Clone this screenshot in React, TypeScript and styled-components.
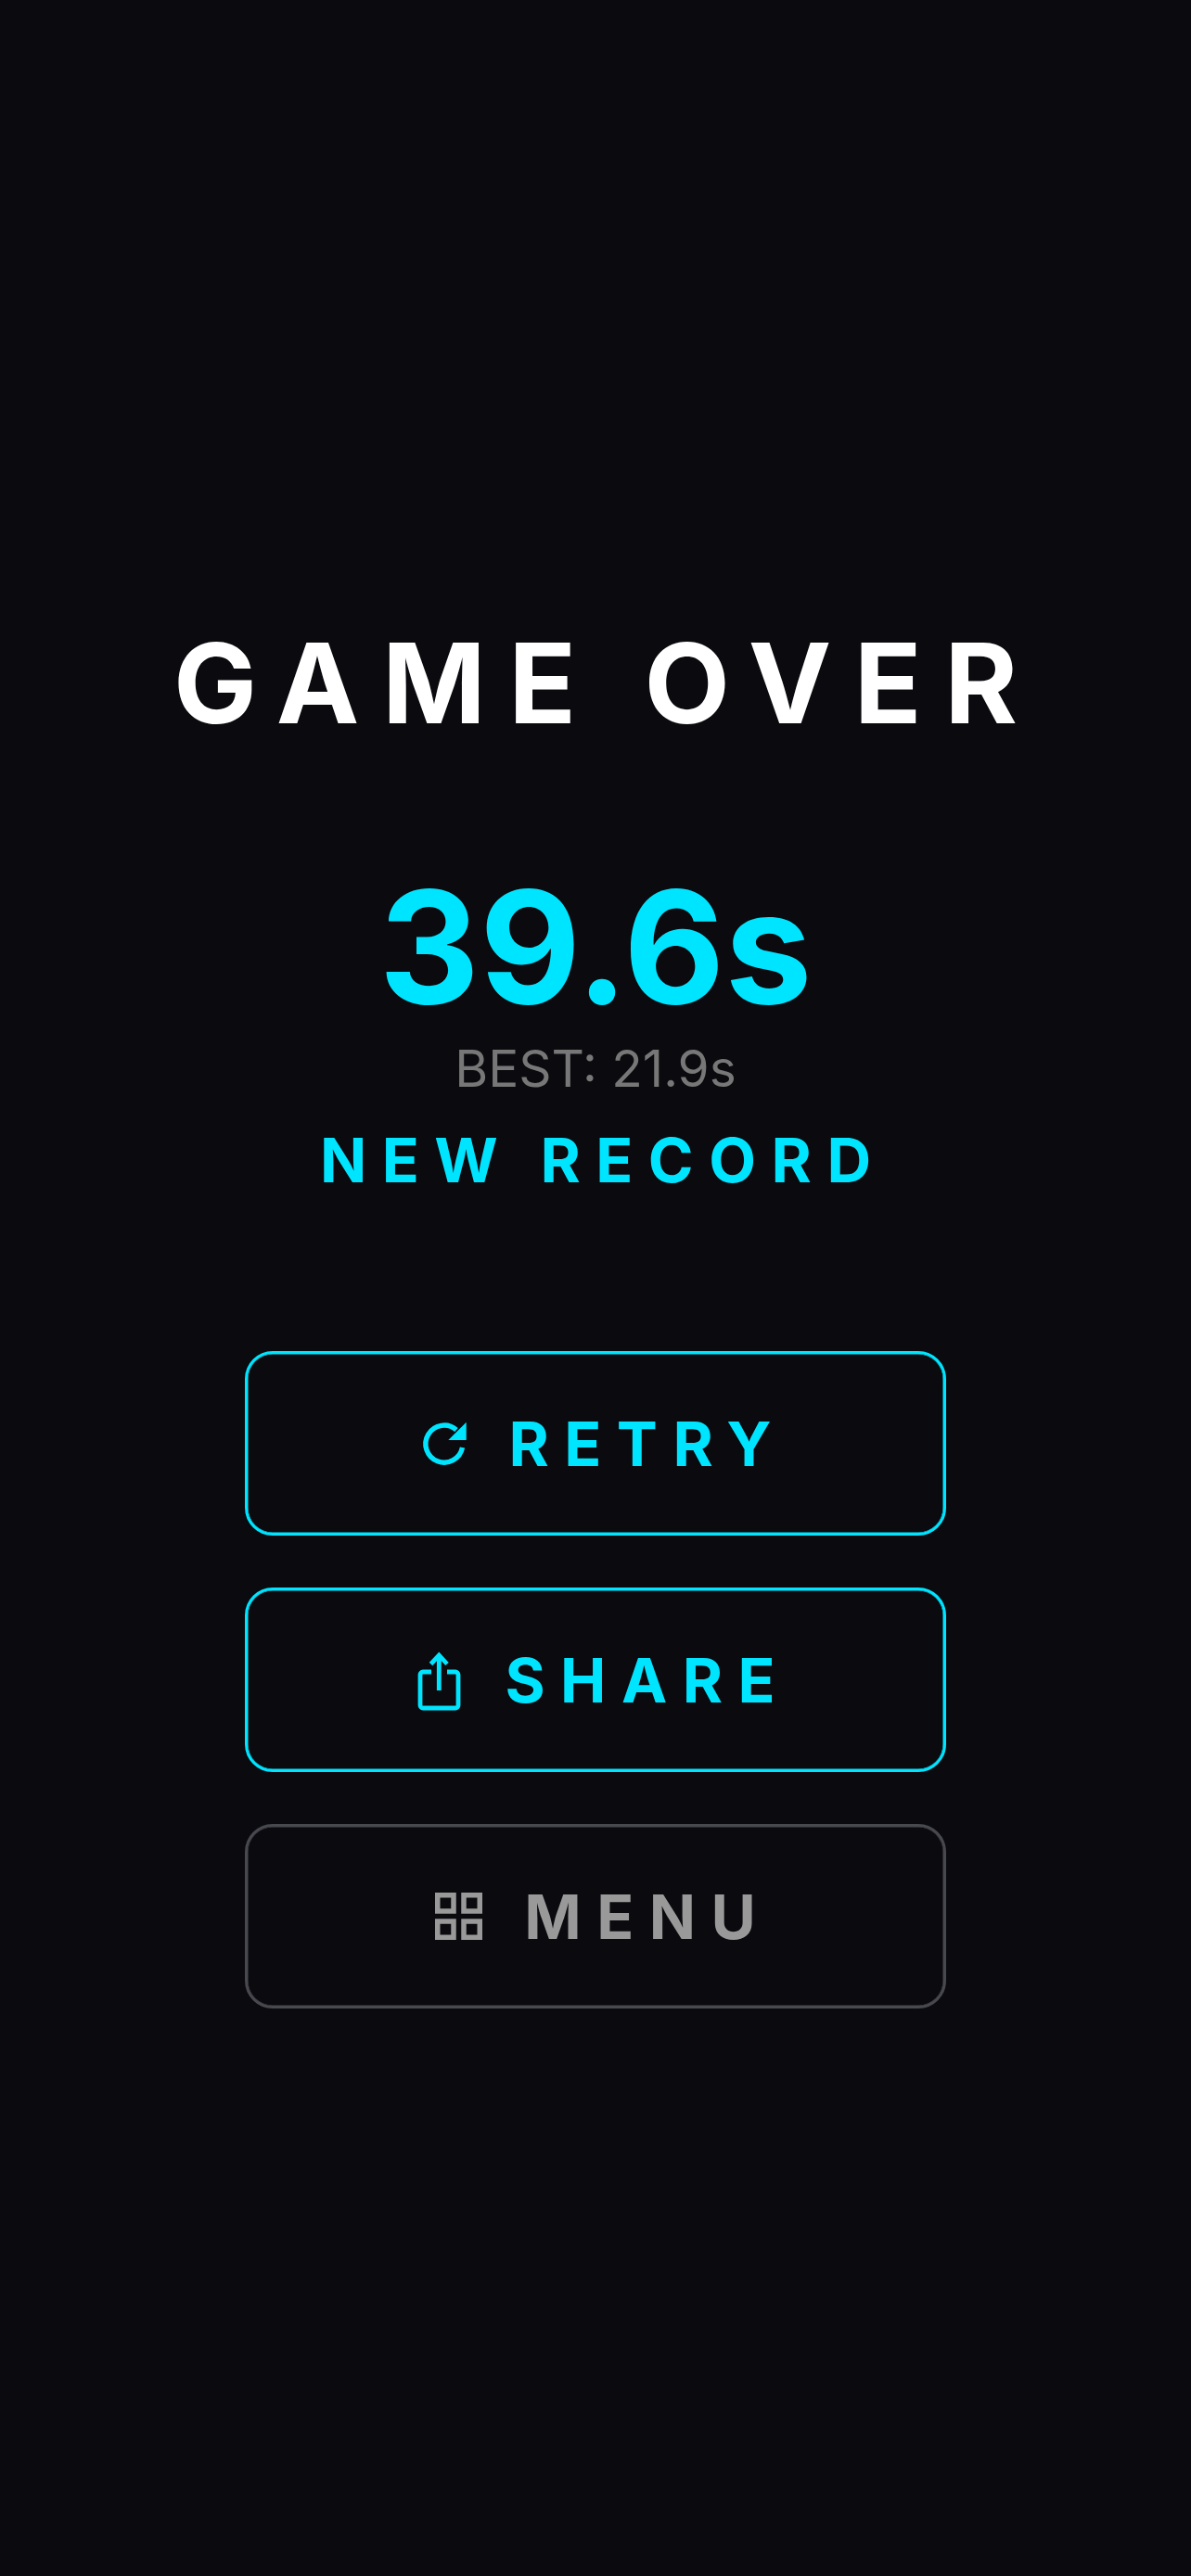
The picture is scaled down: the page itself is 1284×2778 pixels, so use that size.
import * as React from 'react'
import styled, { createGlobalStyle } from 'styled-components'

const GlobalStyle = createGlobalStyle`
  html, body {
    margin: 0;
    background: #0a0a0f;
  }
`

const Screen = styled.div`
  width: 1284px;
  height: 2778px;
  box-sizing: border-box;
  padding-top: 664px;
  display: flex;
  flex-direction: column;
  align-items: center;
  background: #0a0a0f;
  font-family: Inter, "Liberation Sans", sans-serif;
`

const Title = styled.h1`
  margin: 0 -24.5px 0 0;
  color: #fff;
  font-size: 120px;
  line-height: 145px;
  font-weight: 700;
  letter-spacing: 24.5px;
  word-spacing: -4px;
  white-space: nowrap;
`

const Score = styled.div`
  margin-top: 110px;
  color: #00e5ff;
  font-size: 168px;
  line-height: 204px;
  font-weight: 700;
`

const Best = styled.div`
  margin-top: -4px;
  color: #777;
  font-size: 55px;
  line-height: 66px;
  font-weight: 400;
`

const Record = styled.div`
  margin: 26px -16.5px 0 0;
  color: #00e5ff;
  font-size: 66px;
  line-height: 80px;
  font-weight: 700;
  letter-spacing: 16.5px;
  word-spacing: -3px;
`

const Buttons = styled.div`
  margin-top: 166px;
  display: flex;
  flex-direction: column;
  gap: 56px;
`

const ActionButton = styled.button<{ $muted?: boolean }>`
  width: 756px;
  height: 199px;
  padding: 0;
  display: flex;
  align-items: center;
  justify-content: center;
  gap: ${p => (p.$muted ? '45px' : '42px')};
  box-sizing: border-box;
  background: transparent;
  border: 3px solid ${p => (p.$muted ? '#48484f' : '#00e5ff')};
  box-shadow: inset 0 0 0 0.5px ${p => (p.$muted ? '#48484f' : '#00e5ff')};
  border-radius: 30px;
  color: ${p => (p.$muted ? '#999' : '#00e5ff')};
  font-family: inherit;
  font-size: 66px;
  line-height: 80px;
  font-weight: 700;
  letter-spacing: 16.5px;
`

const Label = styled.span`
  margin-right: -16.5px;
`

const RetryIcon = () => (
  <svg width="54" height="54" viewBox="0 0 54 54" fill="none">
    <path d="M46.5 31A20 20 0 1 1 40 12" stroke="currentColor" strokeWidth="5.4" />
    <path d="M50.7 3.7V23H31.3Z" fill="currentColor" />
  </svg>
)

const ShareIcon = () => (
  <svg width="54" height="68" viewBox="2 0 54 68" fill="none" stroke="currentColor" strokeWidth="4.8">
    <path d="M19 25H10a3 3 0 0 0-3 3V61a3 3 0 0 0 3 3H45a3 3 0 0 0 3-3V28a3 3 0 0 0-3-3H36" />
    <path d="M27.3 45V7" />
    <path d="M18.5 16.5L27.3 7L36 16.5" />
  </svg>
)

const MenuIcon = () => (
  <svg width="51" height="51" viewBox="0 0 51 51" fill="none" stroke="currentColor" strokeWidth="5.5">
    <rect x="2.75" y="2.75" width="17.25" height="17.25" />
    <rect x="31" y="2.75" width="17.25" height="17.25" />
    <rect x="2.75" y="31" width="17.25" height="17.25" />
    <rect x="31" y="31" width="17.25" height="17.25" />
  </svg>
)

const App = () => (
  <Screen>
    <GlobalStyle />
    <Title>GAME OVER</Title>
    <Score>39.6s</Score>
    <Best>BEST: 21.9s</Best>
    <Record>NEW RECORD</Record>
    <Buttons>
      <ActionButton><RetryIcon /><Label>RETRY</Label></ActionButton>
      <ActionButton><ShareIcon /><Label>SHARE</Label></ActionButton>
      <ActionButton $muted><MenuIcon /><Label>MENU</Label></ActionButton>
    </Buttons>
  </Screen>
)

export default App
